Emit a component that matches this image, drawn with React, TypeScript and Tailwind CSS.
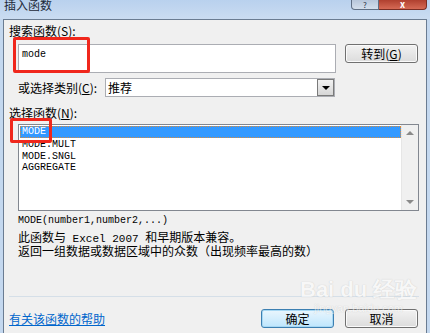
import React from "react";

const mono = "font-['Liberation_Mono','Noto_Sans_CJK_SC',monospace]";

function TitleBar() {
  return (
    <div className="flex h-[19px] items-start justify-between bg-gradient-to-b from-[#b9d1ee] to-[#cadcf1]">
      <span className="-mt-[2px] ml-[4px] text-[12px] leading-[13px] text-[#1e2a3a]">插入函数</span>
      <div className="mr-[3px] flex h-[10px]">
        <div className="flex w-[28px] items-end justify-center rounded-bl-[4px] border border-t-0 border-[#5f6f84] bg-gradient-to-b from-[#b7c6da] to-[#d4dfec] text-[8px] leading-[8px] text-[#2a3444]">
          ?
        </div>
        <div className="flex w-[48px] items-end justify-center rounded-br-[4px] border border-l-0 border-t-0 border-[#7a2e24] bg-gradient-to-b from-[#b0402f] to-[#d66a55] text-[9px] font-bold leading-[8px] text-white">
          x
        </div>
      </div>
    </div>
  );
}

function Btn({ children, primary }: { children: React.ReactNode; primary?: boolean }) {
  return (
    <button
      className={
        primary
          ? "flex h-[19px] w-[73px] items-center justify-center rounded-[3px] border border-[#3c7fb1] bg-gradient-to-b from-[#eaf6fd] to-[#bee6fd] text-[12px] leading-[12px] shadow-[inset_0_0_0_1px_#a7d8f4]"
          : "flex h-[19px] w-[73px] items-center justify-center rounded-[3px] border border-[#707070] bg-gradient-to-b from-[#f2f2f2] to-[#dcdcdc] text-[12px] leading-[12px] shadow-[inset_0_0_0_1px_#fafafa]"
      }
    >
      {children}
    </button>
  );
}

export default function App() {
  const items = ["MODE.MULT", "MODE.SNGL", "AGGREGATE"];
  return (
    <div className="relative h-[333px] w-[430px] overflow-hidden bg-[#c4d8ef] font-['Noto_Sans_CJK_SC',sans-serif] text-[12px] text-black">
      <TitleBar />
      <div className="mx-[3px] flex h-[314px] flex-col border border-b-0 border-[#6a7c92] bg-[#f0f0f0]">
        <div className="ml-[5px] mt-[5px] leading-[12px]">
          搜索函数(<span className="underline">S</span>):
        </div>

        <div className="ml-[14px] mt-[7px] flex items-start">
          <div className={`h-[29px] w-[318px] border border-[#abadb3] bg-white px-[3px] pt-[4px] text-[10px] leading-[12px] ${mono}`}>
            mode
          </div>
          <div className="ml-[9px]">
            <Btn>
              转到(<span className="underline">G</span>)
            </Btn>
          </div>
        </div>

        <div className="ml-[14px] mt-[5px] flex h-[19px] items-center">
          <span className="w-[87px] leading-[12px]">
            或选择类别(<span className="underline">C</span>):
          </span>
          <div className="flex h-[19px] w-[230px] items-center border border-[#abadb3] bg-white">
            <span className="flex-1 pl-[2px] leading-[12px]">推荐</span>
            <div className="flex h-[17px] w-[17px] items-center justify-center border border-[#7a7a7a] bg-gradient-to-b from-[#f2f2f2] to-[#d6d6d6]">
              <div className="h-0 w-0 border-x-[4px] border-t-[4px] border-x-transparent border-t-black" />
            </div>
          </div>
        </div>

        <div className="ml-[5px] mt-[10px] leading-[12px]">
          选择函数(<span className="underline">N</span>):
        </div>

        <div className="ml-[14px] mt-[5px] flex h-[87px] w-[401px] border border-[#828790] bg-white">
          <div className={`flex-1 pl-[1px] pt-[1px] text-[10px] leading-[12px] ${mono}`}>
            <div className="h-[12px] border border-dotted border-[#d98a3a] bg-[#3399ff] pl-[1px] leading-[10px] text-white">
              MODE
            </div>
            {items.map((it) => (
              <div key={it} className="h-[11.5px] pl-[2px] pt-[1px] leading-[12px]">
                {it}
              </div>
            ))}
          </div>
          <div className="flex w-[17px] flex-col items-center justify-between border-l border-[#e6e6e6] bg-[#f0f0f0] py-[6px]">
            <div className="h-0 w-0 border-x-[4px] border-b-[4px] border-x-transparent border-b-[#8a8a8a]" />
            <div className="h-0 w-0 border-x-[4px] border-t-[4px] border-x-transparent border-t-[#8a8a8a]" />
          </div>
        </div>

        <div className={`ml-[14px] mt-[4px] text-[10px] leading-[12px] ${mono}`}>
          MODE(number1,number2,...)
        </div>
        <div className="ml-[14px] mt-[4px] leading-[12px]">
          <div>
            此函数与<span className={`${mono} text-[11px]`}> Excel 2007 </span>和早期版本兼容。
          </div>
          <div>返回一组数据或数据区域中的众数（出现频率最高的数）</div>
        </div>

        <div className="ml-[5px] mt-[39px] h-px w-[410px] bg-[#d5dfe8]" />

        <div className="mt-[12px] flex items-center">
          <a className="ml-[5px] flex-1 leading-[12px] text-[#0066cc] underline" href="#">
            有关该函数的帮助
          </a>
          <Btn primary>确定</Btn>
          <div className="ml-[11px] mr-[8px]">
            <Btn>取消</Btn>
          </div>
        </div>
      </div>

      {/* red annotation boxes */}
      <div className="pointer-events-none absolute left-[13px] top-[37px] h-[36px] w-[77px] rounded-[2px] border-[3px] border-[#f0271c]" />
      <div className="pointer-events-none absolute left-[10px] top-[118px] h-[25px] w-[42px] rounded-[2px] border-[3px] border-[#f0271c]" />

      {/* watermark */}
      <div className="pointer-events-none absolute left-[300px] top-[278px] flex flex-col items-center opacity-50">
        <span className="font-['Liberation_Sans',sans-serif] text-[22px] font-bold leading-[24px] text-white [text-shadow:0_0_1px_#9a9a9a]">
          Bai du 经验
        </span>
        <span className="font-['Liberation_Sans',sans-serif] text-[11px] leading-[12px] text-white [text-shadow:0_0_1px_#9a9a9a]">
          jingyan.baidu.com
        </span>
      </div>
    </div>
  );
}
